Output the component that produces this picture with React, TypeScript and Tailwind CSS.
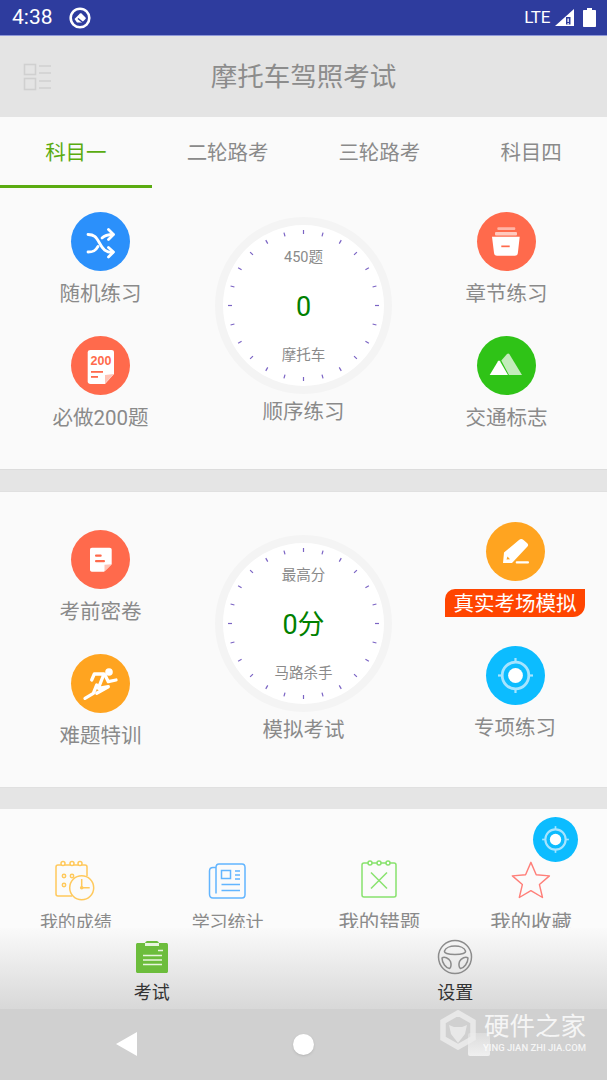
import type { ReactNode } from 'react';

const ticks = Array.from({ length: 24 }, (_, i) => i * 15);

function Circle({ color, children }: { color: string; children: ReactNode }) {
  return (
    <div className={`flex h-[59px] w-[59px] items-center justify-center rounded-full ${color}`}>
      <svg viewBox="0 0 59 59" className="h-[59px] w-[59px]">
        {children}
      </svg>
    </div>
  );
}

function Label({ children, className = '' }: { children: ReactNode; className?: string }) {
  return <div className={`h-[30px] pt-[1px] text-[20.5px] leading-[30px] whitespace-nowrap text-[#8a8a8a] ${className}`}>{children}</div>;
}

function Gauge({ top, value, bottom }: { top: string; value: string; bottom: string }) {
  return (
    <div className="relative flex h-[177px] w-[177px] flex-col items-center rounded-full border-8 border-[#f4f4f4] bg-white">
      <svg viewBox="0 0 161 161" className="absolute inset-0 h-[161px] w-[161px]">
        {ticks.map((a) => (
          <line
            key={a}
            x1="80.5"
            y1="5"
            x2="80.5"
            y2="9"
            stroke="#7b64c4"
            strokeWidth="1.2"
            transform={`rotate(${a} 80.5 80.5)`}
          />
        ))}
      </svg>
      <div className="relative mt-[22px] h-[22px] text-[14.5px] leading-[22px] text-[#8a8a8a]">{top}</div>
      <div className="relative mt-[20px] h-[36px] text-[27px] leading-[36px] text-[#008000]">{value}</div>
      <div className="relative mt-[20px] h-[22px] text-[14.5px] leading-[22px] text-[#8a8a8a]">{bottom}</div>
    </div>
  );
}

const shuffle = (
  <g fill="none" stroke="#fff" strokeWidth="2.8" strokeLinecap="round" strokeLinejoin="round" transform="translate(0 2)">
    <path d="M17 20.5c6 0 8 2 11.5 8.5s6 9.500 13 9.500" />
    <path d="M17 38c6 0 8-2 10-5.500M31 24c2.500-2.500 5-3.500 11-3.500" />
    <path d="M37.500 15.500l5 5-5 5M37.500 33.500l5 4.500-5 5" />
  </g>
);

const doc200 = (
  <g>
    <path d="M19.500 14h21c1.700 0 2.500.8 2.500 2.500V38L34 48H19.500c-1.700 0-2.800-1-2.800-2.500v-29c0-1.700 1.100-2.500 2.800-2.500z" fill="#fff" />
    <path d="M34 47.500V39l9-1z" fill="#ffc3b6" />
    <text x="30" y="28.500" fontSize="12.500" fontWeight="900" fontFamily="Liberation Sans, sans-serif" textAnchor="middle" fill="#ff6a4c">
      200
    </text>
    <rect x="20" y="35" width="12" height="1.800" fill="#ff6a4c" />
    <rect x="20" y="40" width="7" height="1.800" fill="#ff6a4c" />
  </g>
);

const box = (
  <g>
    <rect x="20.300" y="15.300" width="18" height="2.800" rx="1" fill="#ffb5a6" />
    <rect x="18" y="20" width="22" height="3.500" rx="1" fill="#ffc9be" />
    <path d="M15 24.700h27.700l-1.800 16c-.2 2-1 3-3 3H20c-2 0-2.800-1-3-3z" fill="#fff" />
    <rect x="24.300" y="33.500" width="8.400" height="1.700" fill="#ff6a4c" />
  </g>
);

const mountain = (
  <g>
    <path d="M24.300 24.500L30 18q1.300-1.200 2.300 0L45 39H32z" fill="#c3ecbb" />
    <path d="M12.700 39L21 25.300q1-1.500 2 0L31 39z" fill="#fff" />
  </g>
);

const note = (
  <g>
    <path d="M21 17.700h17.500c1.500 0 2.200.8 2.200 2.300v14.300L33 41.700H21c-1.500 0-2-.8-2-2.200V20c0-1.500.5-2.300 2-2.300z" fill="#fff" />
    <path d="M33.500 41.500v-6.700l7.200-.5z" fill="#ffc3b6" />
    <rect x="24" y="24.500" width="6.700" height="2.200" rx="1" fill="#ff6a4c" />
    <rect x="24" y="30" width="10" height="2.200" rx="1" fill="#ff6a4c" />
  </g>
);

const runner = (
  <g fill="none" stroke="#fff" strokeWidth="3.300" strokeLinecap="round" strokeLinejoin="round">
    <circle cx="38" cy="18" r="3.800" fill="#fff" stroke="none" />
    <path d="M20.700 26l2.600-6h9.700l-5.700 14.300 10-1.600-11.600 6.600" />
    <path d="M34 21l3.300 6.700 7.700-1.700" />
    <path d="M25.700 31l-3.400 8.300-8.300 5" />
  </g>
);

const pencil = (
  <g>
    <path d="M17 41l1-10.500L33 18c1.500-1.300 3-1.300 4.500 0l3.500 3c1.500 1.300 1.500 2.500 0 4L26 41z" fill="#fff" />
    <path d="M20.500 37.500l1-3 2.500 2.800z" fill="#ffa420" />
    <rect x="29.700" y="39.300" width="13.300" height="2.200" rx="1" fill="#fff" />
  </g>
);

function TargetMark() {
  return (
    <g transform="translate(29.500 29.500)">
      <circle r="13.300" fill="none" stroke="#a6e4ff" strokeWidth="2.800" />
      <circle r="7.400" fill="#fff" />
      <rect x="-1.100" y="-17.500" width="2.200" height="5" fill="#a6e4ff" />
      <rect x="-1.100" y="12.500" width="2.200" height="5" fill="#a6e4ff" />
      <rect x="-17.500" y="-1.100" width="5" height="2.200" fill="#a6e4ff" />
      <rect x="12.500" y="-1.100" width="5" height="2.200" fill="#a6e4ff" />
    </g>
  );
}

function Section3Item({ label, big, children }: { label: string; big?: boolean; children: ReactNode }) {
  return (
    <div className="flex flex-col items-center">
      <svg viewBox="0 0 44 44" className="h-[44px] w-[44px]">
        {children}
      </svg>
      <div className={`mt-[7px] leading-[26px] whitespace-nowrap text-[#8a8a8a] ${big ? 'text-[20.5px]' : 'text-[18px]'}`}>{label}</div>
    </div>
  );
}

export default function App() {
  return (
    <div className="relative flex h-[1080px] w-[607px] flex-col overflow-hidden bg-[#e5e5e5] font-['Roboto','Noto_Sans_CJK_SC',sans-serif]">
      {/* status bar */}
      <div className="flex h-[36px] shrink-0 items-center justify-between border-b border-[#8e97d8] bg-[#2e3c9e] pr-[11px] pl-[12px] text-white">
        <div className="flex items-center gap-[16px]">
          <span className="text-[21px] leading-none">4:38</span>
          <svg viewBox="0 0 22 22" className="h-[22px] w-[22px]">
            <circle cx="11" cy="11" r="9.300" fill="none" stroke="#fff" strokeWidth="2.600" />
            <path d="M5.500 12l5.500-5.500c.5-.5 1-.5 1.500 0l4 4c.5.5.5 1 0 1.500L13 15.500H8z" fill="#fff" />
            <path d="M9 11.500l5.500 4.500" stroke="#2e3c9e" strokeWidth="1.500" />
          </svg>
        </div>
        <div className="flex items-center">
          <span className="text-[17px] leading-none tracking-[-0.3px]">LTE</span>
          <svg viewBox="0 0 19 17" className="ml-[5px] h-[17px] w-[19px]">
            <path d="M0 17L19 0v17z" fill="#fff" />
            <path d="M11 8h4.500v7.500H11z" fill="#2e3c9e" />
            <path d="M12.500 9.500h1.300v3.500h-1.300zM12.500 14h1.300v1.500h-1.300z" fill="#fff" />
          </svg>
          <svg viewBox="0 0 13 19" className="ml-[9px] h-[19px] w-[13px]">
            <path d="M4 0h5v2h3c.6 0 1 .4 1 1v15c0 .6-.4 1-1 1H1c-.6 0-1-.4-1-1V3c0-.6.4-1 1-1h3z" fill="#fff" />
          </svg>
        </div>
      </div>

      {/* header */}
      <div className="relative flex h-[81px] shrink-0 items-center justify-center bg-[#e4e4e4] pt-[2px]">
        <svg viewBox="0 0 28 28" className="absolute top-[27px] left-[23px] h-[28px] w-[28px]" fill="none" stroke="#d0d0d0" strokeWidth="1.600">
          <rect x="1.500" y="1.500" width="11" height="10" />
          <rect x="1.500" y="15.500" width="11" height="11" />
          <path d="M16 3h12M16 10h12M16 18h12M16 25h12" strokeWidth="1.300" />
        </svg>
        <div className="text-[26.500px] leading-none text-[#8c8c8c]">摩托车驾照考试</div>
      </div>

      <main className="min-h-0 flex-1 overflow-hidden">
        {/* tabs */}
        <div className="bg-[#fafafa]">
          <div className="grid h-[71px] grid-cols-4 text-[20.5px]">
            <div className="flex items-center justify-center border-b-[3px] border-[#5aab10] pt-[5px] text-[#5aab10]">科目一</div>
            <div className="flex items-center justify-center pt-[2px] text-[#8a8a8a]">二轮路考</div>
            <div className="flex items-center justify-center pt-[2px] text-[#8a8a8a]">三轮路考</div>
            <div className="flex items-center justify-center pt-[2px] text-[#8a8a8a]">科目四</div>
          </div>

          <div className="grid h-[282px] grid-cols-[201px_205px_201px] border-b border-[#dcdcdc]">
            <div className="flex flex-col items-center pt-[24px]">
              <Circle color="bg-[#2b90fb]">{shuffle}</Circle>
              <Label className="mt-[7px]">随机练习</Label>
              <div className="mt-[28px]">
                <Circle color="bg-[#ff6a4c]">{doc200}</Circle>
              </div>
              <Label className="mt-[7px]">必做200题</Label>
            </div>
            <div className="flex flex-col items-center pt-[29px]">
              <Gauge top="450题" value="0" bottom="摩托车" />
              <Label className="mt-[2px]">顺序练习</Label>
            </div>
            <div className="flex flex-col items-center pt-[24px]">
              <Circle color="bg-[#ff6a4c]">{box}</Circle>
              <Label className="mt-[7px]">章节练习</Label>
              <div className="mt-[28px]">
                <Circle color="bg-[#2fc317]">{mountain}</Circle>
              </div>
              <Label className="mt-[7px]">交通标志</Label>
            </div>
          </div>
        </div>

        {/* mock exam */}
        <div className="mt-[21px] grid h-[297px] grid-cols-[201px_205px_201px] border-y border-[#e0e0e0] bg-[#fafafa]">
          <div className="flex flex-col items-center pt-[38px]">
            <Circle color="bg-[#ff6a4c]">{note}</Circle>
            <Label className="mt-[7px]">考前密卷</Label>
            <div className="mt-[28px]">
              <Circle color="bg-[#ffa420]">{runner}</Circle>
            </div>
            <Label className="mt-[7px]">难题特训</Label>
          </div>
          <div className="flex flex-col items-center pt-[43px]">
            <Gauge top="最高分" value="0分" bottom="马路杀手" />
            <Label className="mt-[2px]">模拟考试</Label>
          </div>
          <div className="flex flex-col items-center pt-[30px] pl-[17px]">
            <Circle color="bg-[#ffa420]">{pencil}</Circle>
            <div className="mt-[8px] h-[28px] w-[140px] rounded-tl-[10px] rounded-br-[12px] bg-[#ff4500] pt-[1px] text-center text-[20.500px] leading-[28px] whitespace-nowrap text-white">
              真实考场模拟
            </div>
            <div className="mt-[29px]">
              <Circle color="bg-[#0cbcff]">
                <TargetMark />
              </Circle>
            </div>
            <Label className="mt-[7px]">专项练习</Label>
          </div>
        </div>

        {/* my records */}
        <div className="relative mt-[21px] grid h-[200px] grid-cols-4 content-start bg-[#fbfbfb] pt-[50px]">
          <Section3Item label="我的成绩">
            <g fill="none" stroke="#ffc95c" strokeWidth="1.500">
              <path d="M18 37H4c-1.200 0-2-.8-2-2V8c0-1.200.8-2 2-2h27c1.200 0 2 .8 2 2v9" />
              <circle cx="9" cy="4.500" r="2" fill="#fff" />
              <circle cx="18" cy="4.500" r="2" fill="#fff" />
              <circle cx="26" cy="4.500" r="2" fill="#fff" />
              <circle cx="10" cy="17" r="1.700" />
              <circle cx="18" cy="17" r="1.700" />
              <circle cx="10" cy="26" r="1.700" />
              <circle cx="27.700" cy="28.700" r="12" fill="#fbfbfb" />
              <circle cx="27.700" cy="28.700" r="1.800" fill="#ffc95c" stroke="none" />
              <path d="M27.700 20v8.700h8" />
            </g>
          </Section3Item>
          <Section3Item label="学习统计">
            <g fill="none" stroke="#62b5ff" strokeWidth="1.500" transform="translate(0 2.500)">
              <path d="M10 6H7c-2 0-3.500 1.500-3.500 3.500v23C3.500 35 5 36.500 7 36.500h29c2 0 3-1.500 3-3.500V6c0-2-1-3.500-3-3.500H13c-2 0-3 1.500-3 3.500v26" />
              <rect x="15.500" y="9" width="9" height="8" />
              <path d="M29 9.500h5M29 13.500h5M29 17.500h5M15.500 23h18.500M15.500 29h18.500" />
            </g>
          </Section3Item>
          <Section3Item label="我的错题" big>
            <g fill="none" stroke="#88e26d" strokeWidth="1.500">
              <rect x="5" y="4" width="34" height="34" rx="2" />
              <circle cx="13" cy="4" r="2" fill="#fff" />
              <circle cx="22" cy="4" r="2" fill="#fff" />
              <circle cx="31" cy="4" r="2" fill="#fff" />
              <path d="M14 13.500l16 16M30 13.500l-16 16" />
            </g>
          </Section3Item>
          <Section3Item label="我的收藏" big>
            <path
              d="M22 3l5.600 13 13.900 1.200-10.500 9.200 3.200 13.600L22 32.800 9.800 40l3.200-13.600L2.500 17.200 16.400 16z"
              fill="none"
              stroke="#ff7f79"
              strokeWidth="1.500"
              strokeLinejoin="round"
              transform="translate(1 0.500) scale(0.95)"
            />
          </Section3Item>
          <div className="absolute top-[8px] left-[533px] flex h-[45px] w-[45px] items-center justify-center rounded-full bg-[#0cbcff]">
            <svg viewBox="0 0 59 59" className="h-[45px] w-[45px]">
              <TargetMark />
            </svg>
          </div>
        </div>
      </main>

      {/* bottom tabs */}
      <div className="grid h-[81px] shrink-0 grid-cols-2 bg-gradient-to-b from-[#fafafa] to-[#d8d8d8]">
        <div className="flex flex-col items-center pt-[12px]">
          <svg viewBox="0 0 34 34" className="h-[34px] w-[34px]">
            <path d="M3 3h7c1-2 2-2 3-2h8c1 0 2 0 3 2h7c1.500 0 2 .5 2 2v26c0 1.500-.5 2-2 2H3c-1.500 0-2-.5-2-2V5c0-1.500.5-2 2-2z" fill="#6cbd3c" />
            <rect x="10" y="3" width="14" height="3" fill="#e8f5de" />
            <path d="M23 10.500h5M8 15.500h19M8 20h19M8 24.500h19" stroke="#e8f5de" strokeWidth="1.300" />
          </svg>
          <div className="mt-[6px] text-[18px] leading-[26px] text-[#333333]">考试</div>
        </div>
        <div className="flex flex-col items-center pt-[11px]">
          <svg viewBox="0 0 36 36" className="h-[36px] w-[36px]" fill="none" stroke="#8c8c8c" strokeWidth="1.500">
            <circle cx="18" cy="18" r="16.500" />
            <path d="M18 7c5 0 9.500 2 10.500 5 .5 2-3 3.500-10.500 3.500S7 14 7.500 12C8.500 9 13 7 18 7z" />
            <path d="M5 19c2-2 7 0 8.500 3.500 1 3 .5 6.500-1 7C9 29 5 24 5 19z" />
            <path d="M31 19c-2-2-7 0-8.500 3.500-1 3-.5 6.500 1 7C27 29 31 24 31 19z" />
          </svg>
          <div className="mt-[5px] text-[18px] leading-[26px] text-[#333333]">设置</div>
        </div>
      </div>

      {/* system nav */}
      <div className="relative grid h-[71px] shrink-0 grid-cols-3 items-center bg-[#d0d0d0] pb-[1px]">
        <svg viewBox="0 0 22 25" className="ml-[116px] h-[25px] w-[22px]">
          <path d="M21 0v24L0 12z" fill="#fff" />
        </svg>
        <div className="mx-auto h-[21px] w-[21px] rounded-full bg-white shadow-sm" />
        <div className="ml-[63px] h-[23px] w-[22px] rounded-[2px] bg-gradient-to-b from-[#dcdcdc] to-[#f0f0f0]" />
      </div>

      {/* watermark */}
      <div className="absolute top-[1010px] left-[440px] flex items-start gap-[9px] text-white opacity-80">
        <svg viewBox="0 0 36 40" className="h-[40px] w-[36px]">
          <path d="M18 3l15 8.500v17L18 37 3 28.500v-17z" fill="none" stroke="#eeeeee" strokeWidth="5.500" />
          <path d="M9 15l5 2h8l5-2-2 9-7 9-7-9z" fill="#eeeeee" />
        </svg>
        <div className="flex flex-col">
          <div className="-ml-[1px] pt-[1px] text-[25.500px] leading-[30px] whitespace-nowrap">硬件之家</div>
          <div className="-ml-[2px] mt-[1px] text-[9.500px] leading-[11px] font-medium whitespace-nowrap">YING JIAN ZHI JIA.COM</div>
        </div>
      </div>
    </div>
  );
}
